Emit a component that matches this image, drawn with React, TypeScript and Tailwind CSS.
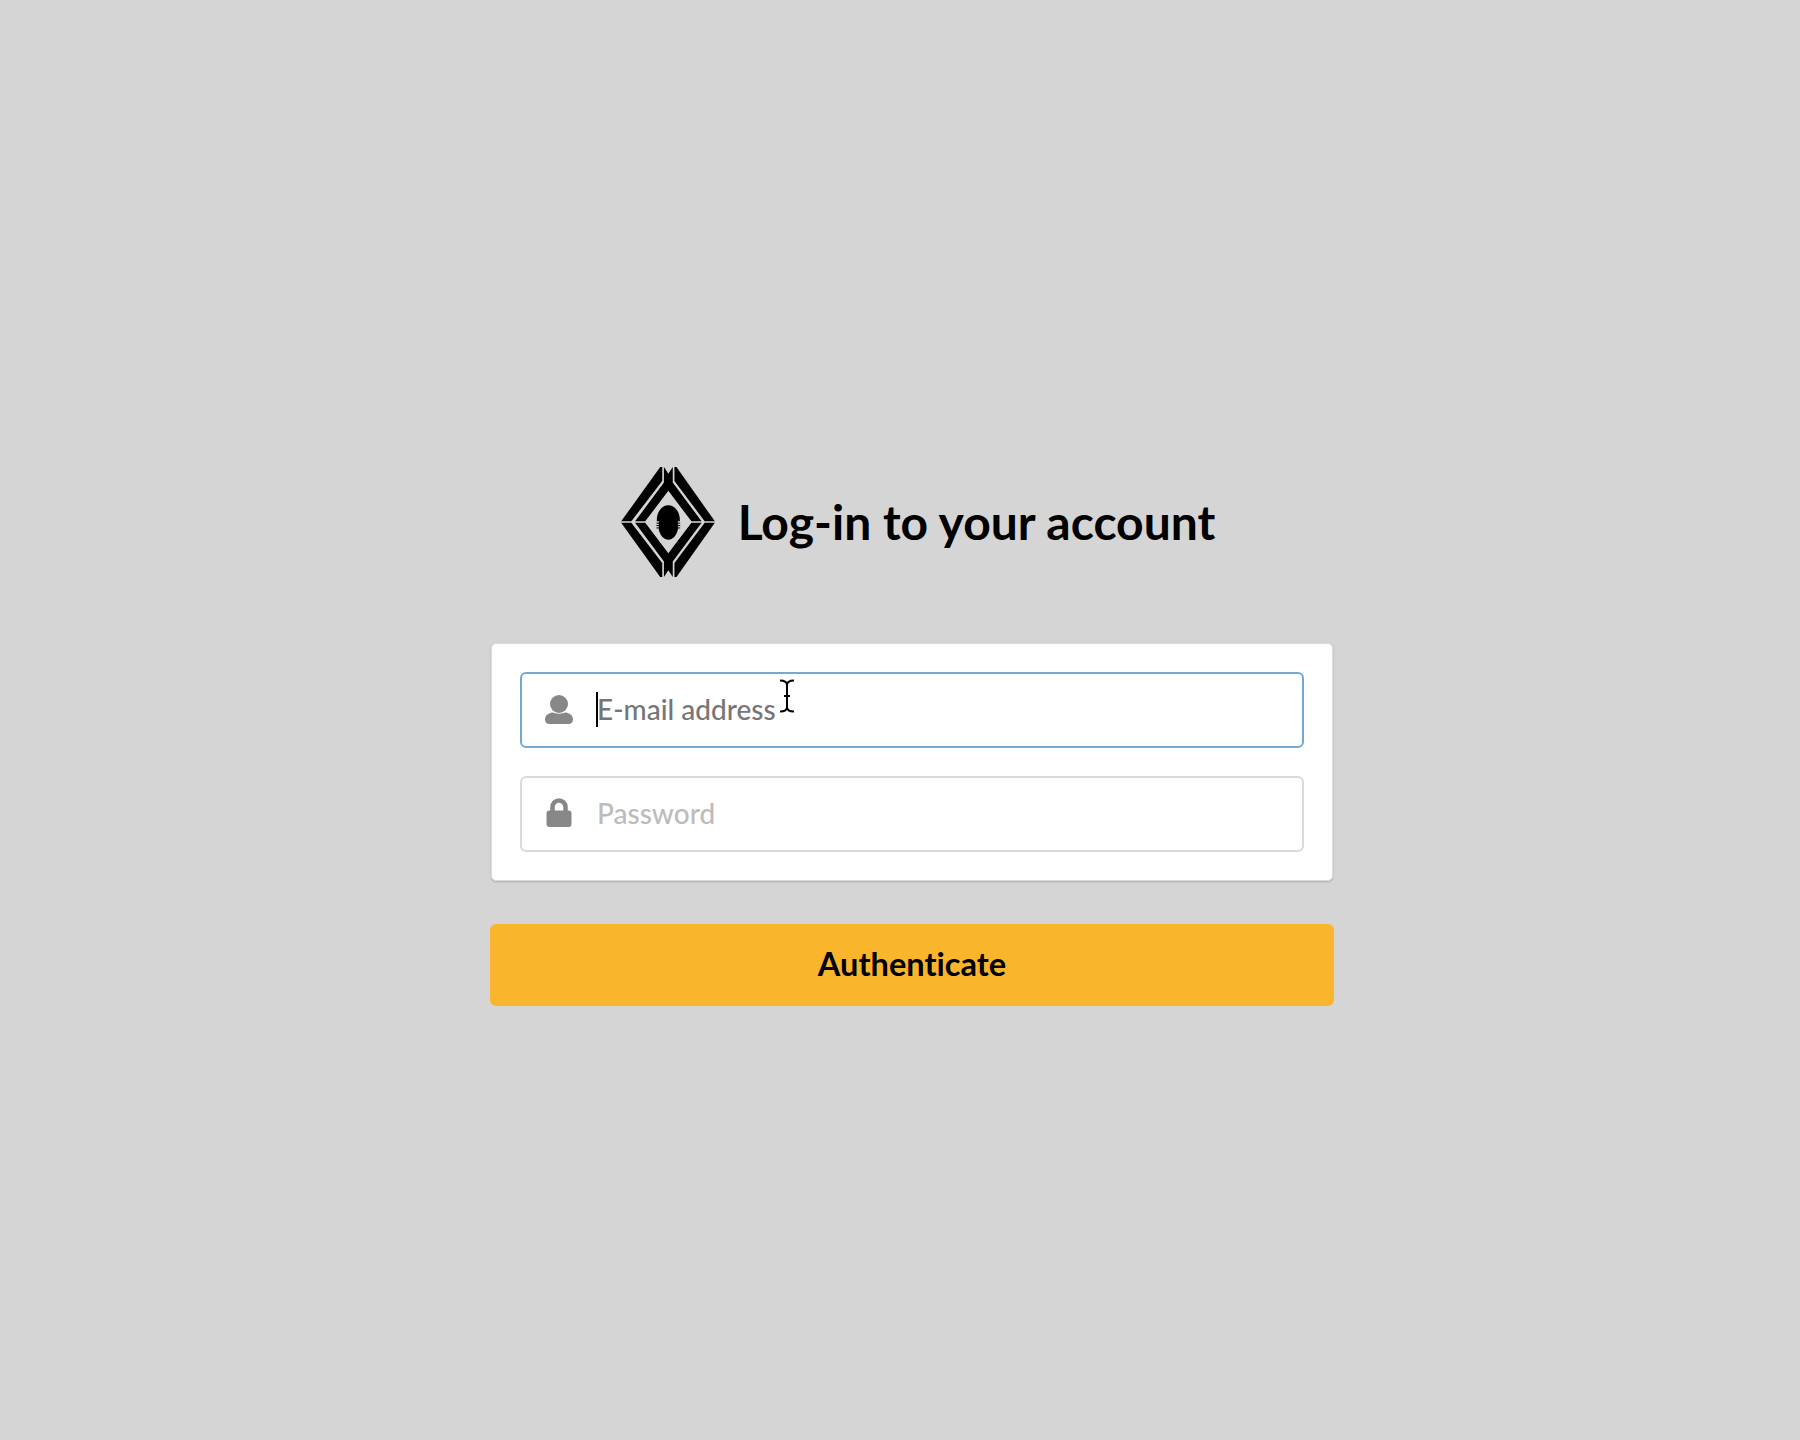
export default function App() {
  return (
    <div className="min-h-[1440px] bg-[#d5d5d5] flex flex-col items-center pt-[467px] pl-6" style={{ fontFamily: "Lato, sans-serif", fontVariantLigatures: "none" }}>
      <div className="w-[844px] flex flex-col items-stretch">
        <div className="flex items-center justify-center gap-[23px] h-[110px] pl-[12px]">
          <svg width="94" height="110" viewBox="66 52 276 324" className="block">
            <g fill="#000">
              <polygon points="181,52 187,52 187,93 96,212 66,212" />
              <polygon points="229,52 223,52 223,93 312,212 342,212" />
              <polygon points="181,376 187,376 187,335 96,216 66,216" />
              <polygon points="229,376 223,376 223,335 312,216 342,216" />
              <polygon points="192,52 205,72 218,52 218,98 303,212 273,212 205,122 137,212 107,212 192,98" />
              <polygon points="192,376 205,356 218,376 218,330 303,216 273,216 205,306 137,216 107,216 192,330" />
              <path d="M171 208C171 184 186 165 205 165C224 165 239 184 239 208V212H171ZM177 236H233C229 254 218 266 205 266C192 266 181 254 177 236Z" />
              <rect x="177" y="210" width="56" height="28" />
              <rect x="170" y="216" width="70" height="3" />
              <rect x="170" y="223" width="70" height="3" />
              <rect x="170" y="230" width="70" height="3" />
            </g>
          </svg>
          <h1 className="text-[48px] leading-none font-bold text-black">Log-in to your account</h1>
        </div>

        <div className="mt-[66px] mx-[1px] bg-white rounded-[5px] border border-[#dcdcdc] shadow-[0_1px_2px_rgba(0,0,0,0.2)] p-[28px] flex flex-col gap-[28px] h-[238px]">
          <div className="relative h-[76px] shrink-0 rounded-[6px] border-2 border-[#76a9d2] flex items-center bg-white">
            <svg width="30" height="30" viewBox="0 0 30 30" className="ml-[22px] block">
              <circle cx="15" cy="9" r="9" fill="#878787" />
              <path d="M1 24.5C1 19.5 6 17.5 9 17.5C11 19 19 19 21 17.5C24 17.5 29 19.5 29 24.5C29 27.5 27 29 24.5 29H5.5C3 29 1 27.5 1 24.5Z" fill="#878787" />
            </svg>
            <span className="ml-[23px] pb-[2px] text-[28px] leading-none font-medium text-[#767676]">E-mail address</span>
            <span className="absolute left-[74px] top-[18px] w-[2px] h-[35px] bg-black" />
            <svg width="16" height="34" viewBox="0 0 16 34" className="absolute left-[257px] top-[5px]" fill="none" stroke="#000" strokeWidth="2">
              <path d="M1 1.5C5 1.5 8 3 8 6V28C8 31 5 32.5 1 32.5M15 1.5C11 1.5 8 3 8 6V28C8 31 11 32.5 15 32.5M5 17H11" />
            </svg>
          </div>
          <div className="h-[76px] shrink-0 rounded-[6px] border-2 border-[#dadada] flex items-center bg-white">
            <svg width="30" height="30" viewBox="0 0 30 30" className="ml-[22px] mb-[2px] block">
              <path d="M8.5 14V9a6.5 6.5 0 0 1 13 0v5" fill="none" stroke="#878787" strokeWidth="4.5" />
              <rect x="2.5" y="12.5" width="25" height="16.5" rx="3" fill="#878787" />
            </svg>
            <span className="ml-[23px] pb-[2px] text-[28px] leading-none font-medium text-[#bcbcbc]">Password</span>
          </div>
        </div>

        <button className="mt-[43px] pb-[1px] h-[82px] w-full rounded-[6px] bg-[#f9b62c] text-black font-bold text-[32.6px] leading-none">Authenticate</button>
      </div>
    </div>
  );
}
